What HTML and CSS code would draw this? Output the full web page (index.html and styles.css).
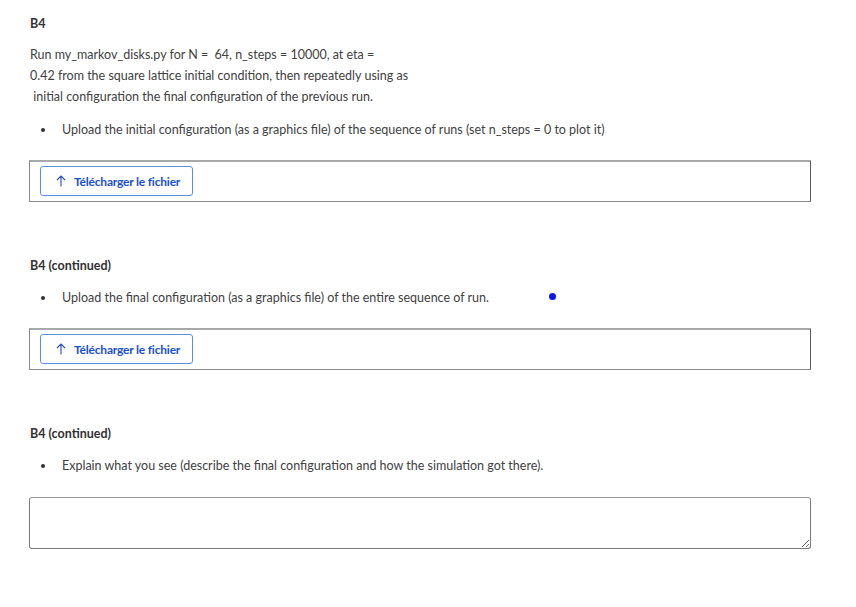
FILE: index.html
```html
<!DOCTYPE html>
<html lang="en">
<head>
<meta charset="utf-8">
<title>B4</title>
<link rel="stylesheet" href="styles.css">
</head>
<body>
<main class="page">
  <section class="problem">
    <h3 class="problem-title">B4</h3>
    <p class="prompt">Run my_markov_disks.py for N =&nbsp; 64, n_steps = 10000, at eta =<br>0.42 from the square lattice initial condition, then repeatedly using as<br>&nbsp;initial configuration the final configuration of the previous run.</p>
    <ul class="items">
      <li>Upload the initial configuration (as a graphics file) of the sequence of runs (set n_steps = 0 to plot it)</li>
    </ul>
    <div class="upload-box">
      <button class="upload-btn" type="button">
        <svg class="arrow" width="10" height="12" viewBox="0 0 10 12"><path d="M5 11.5V1M1 5L5 1L9 5" fill="none" stroke="#1f4fbf" stroke-width="1.1"/></svg>
        <span>Télécharger le fichier</span>
      </button>
    </div>
  </section>

  <section class="problem">
    <h3 class="problem-title">B4 (continued)</h3>
    <ul class="items">
      <li class="has-dot">Upload the final configuration (as a graphics file) of the entire sequence of run.<span class="dot"></span></li>
    </ul>
    <div class="upload-box">
      <button class="upload-btn" type="button">
        <svg class="arrow" width="10" height="12" viewBox="0 0 10 12"><path d="M5 11.5V1M1 5L5 1L9 5" fill="none" stroke="#1f4fbf" stroke-width="1.1"/></svg>
        <span>Télécharger le fichier</span>
      </button>
    </div>
  </section>

  <section class="problem last">
    <h3 class="problem-title">B4 (continued)</h3>
    <ul class="items">
      <li>Explain what you see (describe the final configuration and how the simulation got there).</li>
    </ul>
    <textarea class="answer"></textarea>
  </section>
</main>
</body>
</html>
```

FILE: styles.css
```css
* { box-sizing: border-box; }
html, body { margin: 0; padding: 0; background: #fff; }
body {
  font-family: "Lato", "Liberation Sans", sans-serif;
  font-size: 12.5px;
  color: #414141;
}
.page {
  width: 782px;
  margin-left: 29px;
  padding-top: 15px;
}
.problem { margin-bottom: 55px; }
.problem.last { margin-top: 2px; margin-bottom: 0; }
.problem-title {
  margin: 0;
  font-size: 12.5px;
  line-height: 18px;
  font-weight: 700;
  color: #313131;
  padding-left: 1px;
}
.prompt {
  margin: 11px 0 0;
  line-height: 21px;
  padding-left: 1px;
}
.items {
  list-style: none;
  margin: 12px 0 0;
  padding: 0;
}
.items li {
  position: relative;
  line-height: 21px;
  padding-left: 33px;
}
.items li::before {
  content: "";
  position: absolute;
  left: 12px;
  top: 9px;
  width: 4px;
  height: 4px;
  border-radius: 50%;
  background: #333;
}
.dot {
  position: absolute;
  left: 520px;
  top: 6px;
  width: 7px;
  height: 7px;
  border-radius: 50%;
  background: #0a16f0;
}
.upload-box {
  margin-top: 20px;
  height: 42px;
  border: 1px solid #8a8a8a;
  border-top: 2px solid #a8a8a8;
  border-right-color: #5a5a5a;
  padding: 4px 10px;
}
.upload-btn {
  display: flex;
  align-items: center;
  gap: 8px;
  height: 30px;
  padding: 0 12px 0 15px;
  background: #fff;
  border: 1px solid #5a8fe0;
  border-radius: 3px;
  font-family: inherit;
  font-size: 12px;
  font-weight: 700;
  color: #1a4fd0;
  letter-spacing: -0.2px;
}
.arrow { flex: none; }
.answer {
  display: block;
  margin-top: 21px;
  width: 782px;
  height: 52px;
  border: 1px solid #7a7a7a;
  border-top-color: #9a9a9a;
  border-radius: 3px;
  resize: vertical;
  font-family: inherit;
}
```
